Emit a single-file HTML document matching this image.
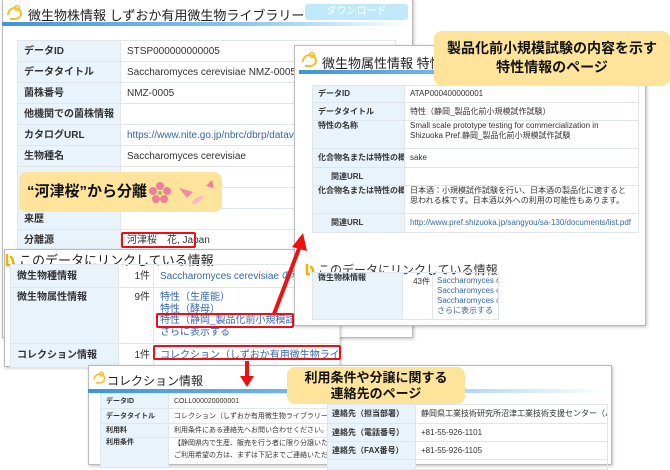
<!DOCTYPE html>
<html><head><meta charset="utf-8">
<style>
*{margin:0;padding:0;box-sizing:border-box}
body{width:670px;height:464px;overflow:hidden;background:#fff;position:relative;font-family:"Liberation Sans","Noto Sans CJK JP",sans-serif;color:#333}
.p{position:absolute;background:#fff;border:1px solid #bbb;box-shadow:1px 1px 3px rgba(0,0,0,.25)}
.a{position:absolute}
table{border-collapse:collapse;position:absolute;table-layout:fixed}
td{border:1px solid #e0e6ec;font-size:10px;line-height:11px;vertical-align:middle;padding:0 6px;white-space:nowrap;overflow:hidden}
td.t{vertical-align:top;padding-top:4px}
td.l{background:#e9f3fc;font-weight:bold;color:#333}
.s8 td{font-size:8px;line-height:10px;padding:0 5px}
.s7 td{font-size:7px;line-height:9px;padding:0 5px}
.lk{color:#3567b4}
.bar{position:absolute;height:4px;background:linear-gradient(90deg,#3d95d8,#8cc8ee 60%,#fff)}
.co{position:absolute;background:#fde49a;border-radius:8px;font-weight:bold;color:#111;text-align:center}
.rb{position:absolute;border:2px solid #e8101a;border-radius:2px}
.ttl{position:absolute;color:#222;white-space:nowrap}
</style></head><body>

<!-- Panel 1 -->
<div class="p" style="left:2px;top:-2px;width:411px;height:340px;border-top:none"></div>
<svg class="a" style="left:4px;top:3px" width="20" height="20" viewBox="0 0 20 20"><path d="M4 12c0-4 3-7 7-7s6 3 6 6-3 5-6 5H6" fill="none" stroke="#f3c130" stroke-width="2"/><circle cx="13" cy="5" r="2.5" fill="none" stroke="#f3c130" stroke-width="1.5"/></svg>
<div class="ttl" style="left:28px;top:5px;font-size:13px">微生物株情報 しずおか有用微生物ライブラリー</div>
<div class="a" style="left:305px;top:4px;width:103px;height:16px;background:#bfe8f8;border-radius:3px;color:#fff;font-size:10px;text-align:center;line-height:16px">ダウンロード</div>
<div class="bar" style="left:2px;top:22px;width:408px"></div>
<table style="left:17px;top:40px;width:379px">
<colgroup><col style="width:103px"><col></colgroup>
<tr style="height:21px"><td class="l">データID</td><td>STSP000000000005</td></tr>
<tr style="height:21px"><td class="l">データタイトル</td><td>Saccharomyces cerevisiae NMZ-0005の株情報</td></tr>
<tr style="height:21px"><td class="l">菌株番号</td><td>NMZ-0005</td></tr>
<tr style="height:21px"><td class="l">他機関での菌株情報</td><td></td></tr>
<tr style="height:21px"><td class="l">カタログURL</td><td class="lk">https://www.nite.go.jp/nbrc/dbrp/dataview?datakey</td></tr>
<tr style="height:21px"><td class="l">生物種名</td><td>Saccharomyces cerevisiae</td></tr>
<tr style="height:21px"><td class="l"></td><td></td></tr>
<tr style="height:21px"><td class="l"></td><td></td></tr>
<tr style="height:21px"><td class="l">来歴</td><td></td></tr>
<tr style="height:21px"><td class="l">分離源</td><td>河津桜　花, Japan</td></tr>
</table>
<div class="rb" style="left:121px;top:232px;width:75px;height:16px"></div>

<!-- Callout 1 -->
<div class="co" style="left:19px;top:172px;width:203px;height:40px;text-align:left;font-size:15px;line-height:40px;padding-left:8px">“河津桜”から分離</div>
<svg class="a" style="left:148px;top:178px" width="70" height="30" viewBox="0 0 70 30">
<g fill="#ef7f98"><circle cx="12" cy="8" r="4"/><circle cx="19" cy="13" r="4"/><circle cx="16" cy="21" r="4"/><circle cx="8" cy="21" r="4"/><circle cx="5" cy="13" r="4"/></g><circle cx="12" cy="15" r="2" fill="#9bc43a"/>
<path d="M31 10l14 4-6 6z" fill="#f08aa0"/><path d="M44 26c6 0 10-4 11-8-5 0-10 2-11 8z" fill="#f7b9c4"/><path d="M58 8l6-6 2 8z" fill="#ef7f98"/></svg>

<!-- Panel 2 (links) -->
<div class="p" style="left:4px;top:249px;width:336px;height:118px"></div>
<svg class="a" style="left:5px;top:253px" width="12" height="14" viewBox="0 0 12 14"><path d="M2 1v11h3M5 4c2 0 3 2 3 6l2 2" fill="none" stroke="#f0b400" stroke-width="2.5"/></svg>
<div class="ttl" style="left:19px;top:250px;font-size:13px">このデータにリンクしている情報</div>
<table style="left:10px;top:264px;width:330px">
<colgroup><col style="width:108px"><col style="width:35px"><col></colgroup>
<tr style="height:23px"><td class="l">微生物種情報</td><td style="text-align:right;padding:0 3px">1件</td><td class="lk">Saccharomyces cerevisiae の種情報</td></tr>
<tr style="height:56px"><td class="l t">微生物属性情報</td><td class="t" style="text-align:right;padding:4px 3px 0">9件</td><td class="lk t" style="line-height:11.5px">特性（生産能）<br>特性（酵母）<br>特性（静岡_製品化前小規模試作試験）<br>さらに表示する</td></tr>
<tr style="height:24px"><td class="l">コレクション情報</td><td style="text-align:right;padding:0 3px">1件</td><td class="lk">コレクション（しずおか有用微生物ライブラリー）</td></tr>
</table>
<div class="rb" style="left:156px;top:313px;width:138px;height:15px"></div>
<div class="rb" style="left:153px;top:345px;width:188px;height:15px"></div>

<!-- Panel 3 (特性) -->
<div class="p" style="left:294px;top:45px;width:352px;height:281px"></div>
<svg class="a" style="left:299px;top:50px" width="20" height="20" viewBox="0 0 20 20"><path d="M4 12c0-4 3-7 7-7s6 3 6 6-3 5-6 5H6" fill="none" stroke="#f3c130" stroke-width="2"/><circle cx="13" cy="5" r="2.5" fill="none" stroke="#f3c130" stroke-width="1.5"/></svg>
<div class="ttl" style="left:322px;top:53px;font-size:13px">微生物属性情報 特性</div>
<div class="bar" style="left:299px;top:70px;width:345px"></div>
<table class="s8" style="left:312px;top:85px;width:327px">
<colgroup><col style="width:92px"><col></colgroup>
<tr style="height:17px"><td class="l">データID</td><td>ATAP000400000001</td></tr>
<tr style="height:18px"><td class="l">データタイトル</td><td>特性（静岡_製品化前小規模試作試験）</td></tr>
<tr style="height:28px"><td class="l t">特性の名称</td><td class="t" style="white-space:normal">Small scale prototype testing for commercialization in Shizuoka Pref.静岡_製品化前小規模試作試験</td></tr>
<tr style="height:19px"><td class="l">化合物名または特性の概要</td><td>sake</td></tr>
<tr style="height:18px"><td class="l" style="padding-left:18px">関連URL</td><td></td></tr>
<tr style="height:28px"><td class="l t">化合物名または特性の概要</td><td class="t" style="white-space:normal">日本酒：小規模試作試験を行い、日本酒の製品化に適すると思われる株です。日本酒以外への利用の可能性もあります。</td></tr>
<tr style="height:19px"><td class="l" style="padding-left:18px">関連URL</td><td class="lk">http://www.pref.shizuoka.jp/sangyou/sa-130/documents/list.pdf</td></tr>
</table>
<svg class="a" style="left:305px;top:263px" width="12" height="13" viewBox="0 0 12 13"><path d="M2 1v10h3M5 4c2 0 3 2 3 5l2 2" fill="none" stroke="#f0b400" stroke-width="2.5"/></svg>
<div class="ttl" style="left:318px;top:261px;font-size:12px;color:#333">このデータにリンクしている情報</div>
<table class="s8" style="left:312px;top:272px;width:187px">
<colgroup><col style="width:90px"><col style="width:30px"><col></colgroup>
<tr style="height:47px"><td class="l t">微生物株情報</td><td class="t" style="text-align:right;padding:4px 2px 0">43件</td><td class="lk t" style="padding:3px 4px 0">Saccharomyces cerevisiae NMZ-0002の株情報<br>Saccharomyces cerevisiae NMZ-0003の株情報<br>Saccharomyces cerevisiae NMZ-0004の株情報<br>さらに表示する</td></tr>
</table>

<!-- Callout 2 -->
<div class="co" style="left:434px;top:31px;width:236px;height:55px;font-size:14px;line-height:19px;padding-top:8px">製品化前小規模試験の内容を示す<br>特性情報のページ</div>

<!-- Panel 4 (collection) -->
<div class="p" style="left:88px;top:365px;width:524px;height:100px"></div>
<svg class="a" style="left:91px;top:369px" width="16" height="18" viewBox="0 0 20 20"><path d="M4 12c0-4 3-7 7-7s6 3 6 6-3 5-6 5H6" fill="none" stroke="#f3c130" stroke-width="2"/><circle cx="13" cy="5" r="2.5" fill="none" stroke="#f3c130" stroke-width="1.5"/></svg>
<div class="ttl" style="left:107px;top:372px;font-size:12px">コレクション情報</div>
<div class="bar" style="left:88px;top:389px;width:520px"></div>
<table class="s7" style="left:100px;top:393px;width:232px">
<colgroup><col style="width:68px"><col></colgroup>
<tr style="height:15px"><td class="l">データID</td><td>COLL000020000001</td></tr>
<tr style="height:15px"><td class="l">データタイトル</td><td>コレクション（しずおか有用微生物ライブラリー）</td></tr>
<tr style="height:14px"><td class="l">利用料</td><td>利用条件にある連絡先へお問い合わせください。</td></tr>
<tr style="height:30px"><td class="l t">利用条件</td><td class="t" style="line-height:12px">【静岡県内で生産、販売を行う者に限り分譲いたします。】<br>ご利用希望の方は、まずは下記までご連絡いただきますようお</td></tr>
</table>
<table class="s8" style="left:327px;top:404px;width:281px">
<colgroup><col style="width:88px"><col></colgroup>
<tr style="height:19px"><td class="l" style="padding:0 4px">連絡先（担当部署）</td><td>静岡県工業技術研究所沼津工業技術支援センター（バイオ科）</td></tr>
<tr style="height:18px"><td class="l" style="padding:0 4px">連絡先（電話番号）</td><td>+81-55-926-1101</td></tr>
<tr style="height:18px"><td class="l" style="padding:0 4px">連絡先（FAX番号）</td><td>+81-55-926-1105</td></tr>
<tr style="height:10px"><td class="l"></td><td></td></tr>
</table>

<!-- Callout 3 -->
<div class="co" style="left:287px;top:367px;width:178px;height:37px;font-size:13px;line-height:16px;padding-top:3px">利用条件や分譲に関する<br>連絡先のページ</div>

<!-- Arrows -->
<svg class="a" style="left:0;top:0" width="670" height="464">
<line x1="274" y1="314" x2="300" y2="246" stroke="#ee1111" stroke-width="4"/>
<polygon points="303,233 292,247 307,251" fill="#ee1111"/>
<line x1="247" y1="361" x2="247" y2="377" stroke="#ee1111" stroke-width="4"/>
<polygon points="240,376 254,376 247,387" fill="#ee1111"/>
</svg>
</body></html>
